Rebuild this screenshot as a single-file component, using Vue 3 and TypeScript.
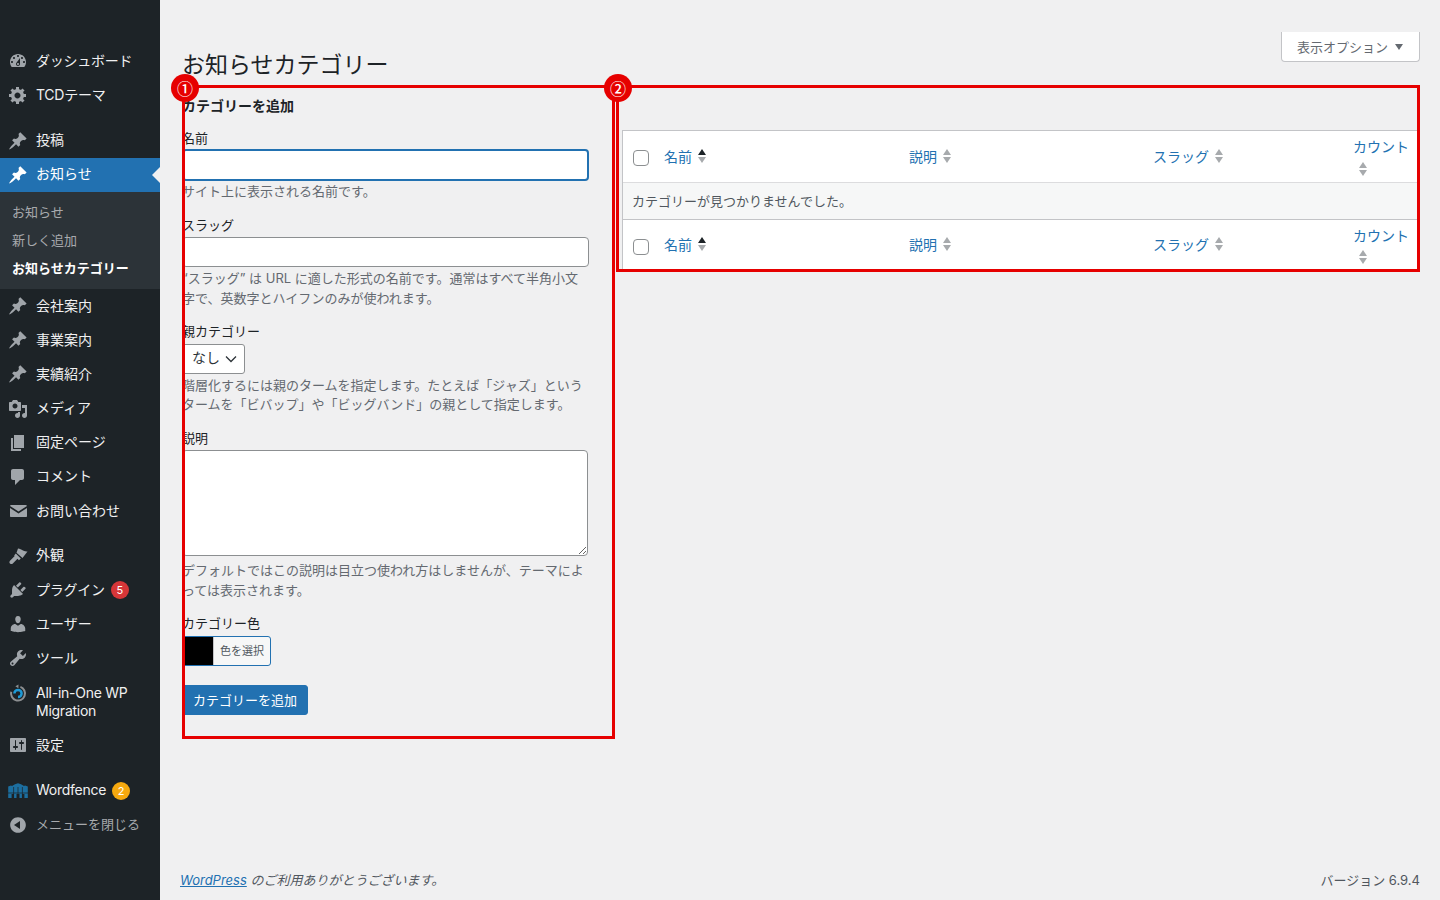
<script setup lang="ts">
interface MenuItem {
  label: string
  icon: string
  gapBefore?: boolean
  current?: boolean
  badge?: string
  badgeKind?: 'red' | 'amber'
  evenodd?: boolean
  tight?: boolean
}

const pin =
  'M10.44 3.02l1.82-1.82 6.36 6.35-1.83 1.82c-1.05-.68-2.48-.57-3.41.36l-.75.75c-.92.93-1.04 2.35-.35 3.41l-1.83 1.82-2.41-2.41-2.8 2.79c-.42.42-3.38 2.71-3.8 2.29s1.86-3.39 2.28-3.81l2.79-2.79L4.1 9.36l1.83-1.82c1.05.69 2.48.57 3.4-.36l.75-.75c.93-.92 1.05-2.35.36-3.41z'

const topItems: MenuItem[] = [
  {
    label: 'ダッシュボード',
    evenodd: true,
    tight: true,
    icon: 'M3.76 16h12.48c1.1-1.37 1.76-3.11 1.76-5 0-4.42-3.58-8-8-8s-8 3.58-8 8c0 1.89.66 3.63 1.76 5zM10 4c.55 0 1 .45 1 1s-.45 1-1 1-1-.45-1-1 .45-1 1-1zM6 6c.55 0 1 .45 1 1s-.45 1-1 1-1-.45-1-1 .45-1 1-1zm8 0c.55 0 1 .45 1 1s-.45 1-1 1-1-.45-1-1 .45-1 1-1zm-5.37 5.55L12 7v6c0 1.1-.9 2-2 2s-2-.9-2-2c0-.57.24-1.08.63-1.45zM4 10c.55 0 1 .45 1 1s-.45 1-1 1-1-.45-1-1 .45-1 1-1zm12 0c.55 0 1 .45 1 1s-.45 1-1 1-1-.45-1-1 .45-1 1-1zm-5 3c0-.55-.45-1-1-1s-1 .45-1 1 .45 1 1 1 1-.45 1-1z',
  },
  {
    label: 'TCDテーマ',
    evenodd: true,
    tight: true,
    icon: 'M18 12h-2.18c-.17.7-.44 1.35-.81 1.93l1.54 1.54-2.1 2.1-1.54-1.54c-.58.36-1.23.63-1.91.79V19H8v-2.18c-.68-.16-1.33-.43-1.91-.79l-1.54 1.54-2.12-2.12 1.54-1.54c-.36-.58-.63-1.23-.79-1.91H1V9.03h2.17c.16-.7.44-1.35.8-1.94L2.43 5.55l2.1-2.1 1.54 1.54c.58-.37 1.24-.64 1.93-.81V2h3v2.18c.68.16 1.33.43 1.91.79l1.54-1.54 2.12 2.12-1.54 1.54c.36.59.64 1.24.8 1.94H18V12zm-8.5 1.5c1.66 0 3-1.34 3-3s-1.34-3-3-3-3 1.34-3 3 1.34 3 3 3z',
  },
  { label: '投稿', icon: pin, gapBefore: true },
  { label: 'お知らせ', icon: pin, current: true },
]

const submenu = ['お知らせ', '新しく追加', 'お知らせカテゴリー']

const restItems: MenuItem[] = [
  { label: '会社案内', icon: pin },
  { label: '事業案内', icon: pin },
  { label: '実績紹介', icon: pin },
  {
    label: 'メディア',
    evenodd: true,
    icon: 'M13 11V4c0-.55-.45-1-1-1h-1.67L9 1H5L3.67 3H2c-.55 0-1 .45-1 1v7c0 .55.45 1 1 1h10c.55 0 1-.45 1-1zM7 4.5c1.38 0 2.5 1.12 2.5 2.5S8.38 9.5 7 9.5 4.5 8.38 4.5 7 5.62 4.5 7 4.5zM14 6h5v10.5c0 1.38-1.12 2.5-2.5 2.5S14 17.88 14 16.5s1.12-2.5 2.5-2.5c.17 0 .34.02.5.05V9h-3V6zm-4 8.05V13h2v3.5c0 1.38-1.12 2.5-2.5 2.5S7 17.88 7 16.5 8.12 14 9.5 14c.17 0 .34.02.5.05z',
  },
  { label: '固定ページ', icon: 'M6 15V2h10v13H6zm-1 1h8v2H3V5h2v11z' },
  {
    label: 'コメント',
    icon: 'M5 2h9c1.1 0 2 .9 2 2v7c0 1.1-.9 2-2 2h-2l-5 5v-5H5c-1.1 0-2-.9-2-2V4c0-1.1.9-2 2-2z',
  },
  {
    label: 'お問い合わせ',
    icon: 'M3 4h14.600c.7 0 1.200.4 1.400 1L10.500 10.400 2 5c.2-.6.500-1 1-1zM2 7l8.500 5.400L19 7v8c0 .6-.4 1-1 1H3c-.6 0-1-.4-1-1z',
  },
  {
    label: '外観',
    gapBefore: true,
    icon: 'M10 2.500c2 0 3.200 1 5 2 1.600.8 3 1 4.500 1l-5 6.500L8.500 6.800zM7.800 7.600l5 5-1.900 1.600-1.400-1.400-4.700 4.700c-.8.8-2 .8-2.800 0s-.8-2 0-2.800l4.700-4.700-.6-.6z',
  },
  {
    label: 'プラグイン',
    badge: '5',
    badgeKind: 'red',
    tight: true,
    icon: 'M13.11 4.36L9.87 7.6 8 5.73l3.24-3.24c.35-.34 1.05-.2 1.56.32.52.51.66 1.21.31 1.55zm-8 1.77l.91-1.12 9.01 9.01-1.19.84c-.71.71-2.63 1.16-3.82 1.16H6.14L4.9 17.26c-.59.59-1.54.59-2.12 0-.59-.58-.59-1.53 0-2.12l1.24-1.24v-3.88c0-1.13.4-3.19 1.09-3.89zm7.26 3.97l3.24-3.24c.34-.35 1.04-.21 1.55.31.52.51.66 1.21.31 1.55l-3.24 3.25z',
  },
  {
    label: 'ユーザー',
    icon: 'M10 9.25c-2.27 0-2.73-3.44-2.73-3.44C7 4.02 7.82 2 9.97 2c2.16 0 2.98 2.02 2.71 3.81 0 0-.41 3.44-2.68 3.44zm0 2.57L12.72 10c2.39 0 4.52 2.33 4.52 4.53v2.49s-3.65 1.13-7.24 1.13c-3.65 0-7.24-1.13-7.24-1.13v-2.49c0-2.25 1.94-4.48 4.47-4.48z',
  },
  {
    label: 'ツール',
    evenodd: true,
    icon: 'M16.68 9.77c-1.34 1.34-3.3 1.67-4.95.99l-5.41 6.52c-.99.99-2.59.99-3.58 0s-.99-2.59 0-3.57l6.52-5.42c-.68-1.65-.35-3.61.99-4.95 1.28-1.28 3.12-1.62 4.72-1.06l-2.89 2.89 2.82 2.82 2.86-2.87c.53 1.58.18 3.39-1.08 4.65zM3.81 16.21c.4.39 1.04.39 1.43 0 .4-.4.4-1.04 0-1.43-.39-.4-1.03-.4-1.43 0-.39.39-.39 1.03 0 1.43z',
  },
]

const settingsIcon =
  'M18 16V4c0-.55-.45-1-1-1H3c-.55 0-1 .45-1 1v12c0 .55.45 1 1 1h14c.55 0 1-.45 1-1zM8 11h1c.55 0 1 .45 1 1s-.45 1-1 1H8v1.5c0 .28-.22.5-.5.5s-.5-.22-.5-.5V13H6c-.55 0-1-.45-1-1s.45-1 1-1h1V5.5c0-.28.22-.5.5-.5s.5.22.5.5V11zm5-2h-1c-.55 0-1-.45-1-1s.45-1 1-1h1V5.5c0-.28.22-.5.5-.5s.5.22.5.5V7h1c.55 0 1 .45 1 1s-.45 1-1 1h-1v5.5c0 .28-.22.5-.5.5s-.5-.22-.5-.5V9z'
const collapseIcon =
  'M10 2.16c4.33 0 7.84 3.51 7.84 7.84s-3.51 7.84-7.84 7.84S2.16 14.33 2.16 10 5.71 2.16 10 2.16zm2 11.84V6l-6 4z'

const columns = [
  { label: '名前', active: true },
  { label: '説明', active: false },
  { label: 'スラッグ', active: false },
  { label: 'カウント', active: false },
]
</script>

<template>
  <div class="admin">
    <aside class="sidebar">
      <ul class="menu">
        <li
          v-for="item in topItems"
          :key="item.label"
          class="menu-item"
          :class="{ gap: item.gapBefore, current: item.current, tight: item.tight }"
        >
          <svg class="menu-icon" viewBox="0 0 20 20">
            <path :d="item.icon" :fill-rule="item.evenodd ? 'evenodd' : 'nonzero'" />
          </svg>
          <span>{{ item.label }}</span>
        </li>
      </ul>
      <ul class="submenu">
        <li v-for="(s, i) in submenu" :key="s" :class="{ on: i === 2 }">{{ s }}</li>
      </ul>
      <ul class="menu">
        <li
          v-for="item in restItems"
          :key="item.label"
          class="menu-item"
          :class="{ gap: item.gapBefore, tight: item.tight, 'gap-small': item.gapBefore }"
        >
          <svg class="menu-icon" viewBox="0 0 20 20">
            <path :d="item.icon" :fill-rule="item.evenodd ? 'evenodd' : 'nonzero'" />
          </svg>
          <span>{{ item.label }}</span>
          <em v-if="item.badge" class="badge" :class="item.badgeKind">{{ item.badge }}</em>
        </li>
        <li class="menu-item multi tight">
          <svg class="menu-icon" viewBox="0 0 20 20">
            <path d="M10.500 1.500 7.400 3.300l3 1.900z" fill="#8c8f91" />
            <circle cx="10" cy="10.500" r="7" fill="none" stroke="#8c8f91" stroke-width="2" stroke-dasharray="32 12" transform="rotate(-70 10 10.500)" />
            <path d="M6.400 10.500a3.600 3.600 0 1 1 3.600 3.600" fill="none" stroke="#1e9ad6" stroke-width="2.500" />
          </svg>
          <span>All-in-One WP Migration</span>
        </li>
        <li class="menu-item">
          <svg class="menu-icon" viewBox="0 0 20 20">
            <path :d="settingsIcon" fill-rule="evenodd" />
          </svg>
          <span>設定</span>
        </li>
        <li class="menu-item gap tight">
          <svg class="menu-icon" viewBox="0 0 20 20">
            <path
              d="M.2 5.600 3 4.600l1 .3L7 3.200l3-1 3 1 3 1.700 1-.3 2.800 1V17h-3.400v-4H14v4h-2.500v-4H8.500v4H6v-4H3.600v4H.2z"
              fill="#1c6e9f"
            />
            <path d="M0 12h20M5.600 6v11M10 6v11M14.400 6v11" stroke="#1d2327" stroke-width=".7" fill="none" />
          </svg>
          <span>Wordfence</span>
          <em class="badge amber">2</em>
        </li>
        <li class="menu-item collapse">
          <svg class="menu-icon" viewBox="0 0 20 20">
            <path :d="collapseIcon" fill-rule="evenodd" />
          </svg>
          <span>メニューを閉じる</span>
        </li>
      </ul>
    </aside>

    <main class="content">
      <div class="wrap">
        <header class="page-head">
          <h1>お知らせカテゴリー</h1>
          <button class="screen-tab" type="button">表示オプション<i class="tab-arrow"></i></button>
        </header>

        <div class="columns">
          <section class="col-left">
            <h2>カテゴリーを追加</h2>
            <div class="field first">
              <label>名前</label>
              <input class="focused name-input" type="text" />
              <p>サイト上に表示される名前です。</p>
            </div>
            <div class="field">
              <label>スラッグ</label>
              <input class="slug-input" type="text" />
              <p>“スラッグ” は URL に適した形式の名前です。通常はすべて半角小文字で、英数字とハイフンのみが使われます。</p>
            </div>
            <div class="field">
              <label>親カテゴリー</label>
              <div class="select">
                なし
                <svg viewBox="0 0 12 8" width="12" height="8">
                  <path d="M1 1.500l5 5 5-5" fill="none" stroke="#2c3338" stroke-width="1.300" />
                </svg>
              </div>
              <p>階層化するには親のタームを指定します。たとえば「ジャズ」というタームを「ビバップ」や「ビッグバンド」の親として指定します。</p>
            </div>
            <div class="field">
              <label>説明</label>
              <textarea></textarea>
              <p>デフォルトではこの説明は目立つ使われ方はしませんが、テーマによっては表示されます。</p>
            </div>
            <div class="field">
              <label>カテゴリー色</label>
              <div class="color-btn">
                <span class="swatch"></span>
                <span class="color-text">色を選択</span>
              </div>
            </div>
            <button class="primary" type="button">カテゴリーを追加</button>
          </section>

          <section class="col-right">
            <table class="list">
              <colgroup>
                <col class="c-check" />
                <col class="c-name" />
                <col class="c-desc" />
                <col class="c-slug" />
                <col />
              </colgroup>
              <thead>
                <tr>
                  <th class="check"><span class="checkbox"></span></th>
                  <th v-for="c in columns" :key="c.label">
                    <span class="sort-link">{{ c.label }}</span
                    ><span class="sort" :class="{ active: c.active }"><i class="up"></i><i class="down"></i></span>
                  </th>
                </tr>
              </thead>
              <tbody>
                <tr>
                  <td colspan="5" class="empty">カテゴリーが見つかりませんでした。</td>
                </tr>
              </tbody>
              <tfoot>
                <tr>
                  <th class="check"><span class="checkbox"></span></th>
                  <th v-for="c in columns" :key="c.label">
                    <span class="sort-link">{{ c.label }}</span
                    ><span class="sort" :class="{ active: c.active }"><i class="up"></i><i class="down"></i></span>
                  </th>
                </tr>
              </tfoot>
            </table>
          </section>

          <!-- 注釈の赤枠 -->
          <div class="note-box note-left"><span class="note-num">①</span></div>
          <div class="note-box note-right"><span class="note-num">②</span></div>
        </div>
      </div>

      <footer class="foot">
        <span class="thanks"><a>WordPress</a> のご利用ありがとうございます。</span>
        <span>バージョン 6.9.4</span>
      </footer>
    </main>
  </div>
</template>

<style>
html,
body {
  margin: 0;
  background: #f0f0f1;
}
</style>

<style scoped>
.admin {
  display: flex;
  height: 900px;
  overflow: hidden;
  font-family: Inter, "Noto Sans CJK JP", sans-serif;
  font-size: 13px;
  color: #3c434a;
  background: #f0f0f1;
}

.sidebar {
  width: 160px;
  flex: none;
  padding-top: 44px;
  background: #1d2327;
  box-sizing: border-box;
}

ul {
  list-style: none;
  margin: 0;
  padding: 0;
}

.menu-item {
  display: flex;
  align-items: center;
  gap: 8px;
  height: 34.2px;
  padding-left: 8px;
  box-sizing: border-box;
  font-size: 14px;
  color: #f0f0f1;
}

.menu-item > span {
  margin-bottom: 3px;
}

.menu-item.tight > span {
  letter-spacing: -0.25px;
}

.menu-item.gap {
  margin-top: 11.4px;
}

.menu-item.gap-small {
  margin-top: 10.5px;
}

.menu-item.multi {
  height: 52.5px;
  align-items: flex-start;
  padding-top: 8.5px;
  line-height: 18px;
}

.menu-item.current {
  position: relative;
  height: 34px;
  background: #2271b1;
  color: #fff;
}

.menu-item.current::after {
  content: "";
  position: absolute;
  right: 0;
  top: 50%;
  margin-top: -8px;
  border: 8px solid transparent;
  border-right-color: #f0f0f1;
}

.menu-item.collapse {
  color: #a7aaad;
  font-size: 13px;
}

.menu-icon {
  width: 20px;
  height: 20px;
  flex: none;
  fill: #a0a5aa;
}

.multi .menu-icon {
  margin-top: -1px;
}

.current .menu-icon {
  fill: #fff;
}

.submenu {
  background: #2c3338;
  padding: 6px 0 7px;
}

.submenu li {
  height: 28px;
  line-height: 28px;
  padding-left: 12px;
  font-size: 13px;
  color: #c3c4c7;
  opacity: 0.82;
}

.submenu li.on {
  font-weight: 700;
  color: #fff;
  opacity: 1;
}

.badge {
  display: block;
  width: 18px;
  height: 18px;
  margin-left: -2px;
  border-radius: 50%;
  font-style: normal;
  font-size: 11px;
  line-height: 18px;
  text-align: center;
  color: #fff;
}

.badge.red {
  background: #d63638;
}

.badge.amber {
  background: #f6a90f;
}

.content {
  flex: 1;
  min-width: 0;
  display: flex;
  flex-direction: column;
  padding-left: 20px;
  padding-right: 20px;
}

.wrap {
  flex: 1;
  margin-left: 2px;
}

.page-head {
  display: flex;
  justify-content: space-between;
  align-items: flex-start;
  height: 85px;
}

h1 {
  margin: 50px 0 0;
  font-size: 23px;
  font-weight: 400;
  line-height: 30px;
  color: #1d2327;
}

.screen-tab {
  display: flex;
  align-items: center;
  gap: 7px;
  height: 30px;
  margin-top: 32px;
  padding: 0 16px 0 15px;
  border: 1px solid #c3c4c7;
  border-top: none;
  border-radius: 0 0 4px 4px;
  background: #fff;
  font: inherit;
  color: #646970;
}

.tab-arrow {
  width: 0;
  height: 0;
  border: 4.5px solid transparent;
  border-top: 6px solid #646970;
  border-bottom: none;
}

.columns {
  position: relative;
  display: flex;
  align-items: flex-start;
}

.col-left {
  width: 433px;
  flex: none;
  box-sizing: border-box;
  padding-right: 25px;
}

h2 {
  margin: 11px 0 0;
  font-size: 14px;
  font-weight: 700;
  line-height: 19px;
  color: #1d2327;
}

.field {
  margin-top: 14px;
}

label {
  display: block;
  height: 19px;
  margin-bottom: 2.5px;
  line-height: 19px;
  color: #1d2327;
}

.first label {
  margin-bottom: 1px;
}

.field p {
  margin: 2px 0 0;
  font-size: 13px;
  line-height: 19.5px;
  color: #646970;
}

.field.first p {
  margin-top: 1px;
}

input,
textarea {
  display: block;
  box-sizing: border-box;
  margin: 0;
  padding: 0 8px;
  background: #fff;
  border: 1px solid #8c8f91;
  border-radius: 4px;
  outline: none;
}

.name-input {
  width: 407px;
  height: 32px;
}

.slug-input {
  width: 407px;
  height: 30px;
}

input.focused {
  border: 2px solid #2271b1;
}

.select {
  display: flex;
  align-items: center;
  justify-content: space-between;
  box-sizing: border-box;
  width: 63px;
  height: 30px;
  padding: 0 7px 3px 9px;
  background: #fff;
  border: 1px solid #8c8f91;
  border-radius: 3px;
  font-size: 14px;
  color: #2c3338;
}

.select svg {
  margin-top: 3px;
}

textarea {
  width: 406px;
  height: 106px;
}

.field textarea + p {
  margin-top: 5px;
}

.color-btn {
  display: flex;
  align-items: stretch;
  box-sizing: border-box;
  width: 89px;
  height: 30px;
  background: #f6f7f7;
  border: 1px solid #2271b1;
  border-radius: 3px;
  overflow: hidden;
}

.swatch {
  width: 30px;
  background: #000;
  border-right: 1px solid #c3c4c7;
}

.color-text {
  padding-left: 6px;
  font-size: 11px;
  line-height: 28px;
  color: #50575e;
  white-space: nowrap;
}

.primary {
  display: block;
  height: 30px;
  width: 126px;
  margin-top: 19px;
  padding: 0;
  background: #2271b1;
  border: 1px solid #2271b1;
  border-radius: 3px;
  font: inherit;
  color: #fff;
}

.col-right {
  flex: 1;
  min-width: 0;
  padding: 45px 0 0 7px;
}

.list {
  width: 100%;
  table-layout: fixed;
  border-collapse: separate;
  border-spacing: 0;
  background: #fff;
  border: 1px solid #c3c4c7;
}

.c-check {
  width: 31px;
}

.c-name {
  width: 245px;
}

.c-desc {
  width: 244px;
}

.c-slug {
  width: 200px;
}

th {
  height: 52px;
  padding: 0 8px 0 10px;
  box-sizing: border-box;
  font-size: 14px;
  font-weight: 400;
  line-height: 20px;
  text-align: left;
  vertical-align: middle;
}

th.check {
  padding: 0 0 0 10px;
}

thead th:last-child {
  padding-top: 1px;
}

thead th:last-child .sort {
  margin-top: 2px;
}

tfoot th:last-child {
  padding-top: 3px;
}

tfoot th:last-child .sort {
  margin-top: 0;
}

thead th {
  border-bottom: 1px solid #dcdcde;
}

tfoot th {
  height: 50px;
  border-top: 1px solid #c3c4c7;
}

.checkbox {
  display: block;
  box-sizing: border-box;
  width: 16px;
  height: 16px;
  margin-top: 3px;
  background: #fff;
  border: 1px solid #8c8f91;
  border-radius: 4px;
}

tfoot .checkbox {
  margin-top: 4px;
}

.sort-link {
  color: #2271b1;
  white-space: nowrap;
}

.sort {
  display: inline-flex;
  flex-direction: column;
  gap: 2px;
  vertical-align: middle;
  width: 8px;
  margin-left: 6px;
  margin-top: -3px;
}

.sort i {
  display: block;
  width: 0;
  height: 0;
  border-left: 4px solid transparent;
  border-right: 4px solid transparent;
}

.sort .up {
  border-bottom: 6px solid #a7aaad;
}

.sort .down {
  border-top: 6px solid #a7aaad;
}

.sort.active .up {
  border-bottom-color: #1d2327;
}

.empty {
  height: 36px;
  padding: 0 9px 2px;
  box-sizing: border-box;
  background: #f6f7f7;
  font-size: 13px;
  color: #50575e;
}

.note-box {
  position: absolute;
  top: 0;
  box-sizing: border-box;
  border: 3px solid #e60000;
  pointer-events: none;
}

.note-left {
  left: 0;
  width: 433px;
  height: 654px;
}

.note-right {
  left: 434px;
  width: 804px;
  height: 187px;
}

.note-num {
  position: absolute;
  top: -14px;
  width: 28px;
  height: 28px;
  border-radius: 50%;
  background: #e60000;
  font-family: "Noto Sans CJK JP", sans-serif;
  font-size: 16px;
  font-weight: 500;
  line-height: 28px;
  text-align: center;
  color: #fff;
}

.note-left .note-num {
  left: -14px;
}

.note-right .note-num {
  left: -15px;
}

.foot {
  display: flex;
  justify-content: space-between;
  align-items: center;
  box-sizing: border-box;
  height: 40px;
  padding-bottom: 2px;
  font-size: 13px;
  color: #50575e;
}

.thanks {
  font-style: italic;
}

.thanks a {
  color: #2271b1;
  text-decoration: underline;
}
</style>
